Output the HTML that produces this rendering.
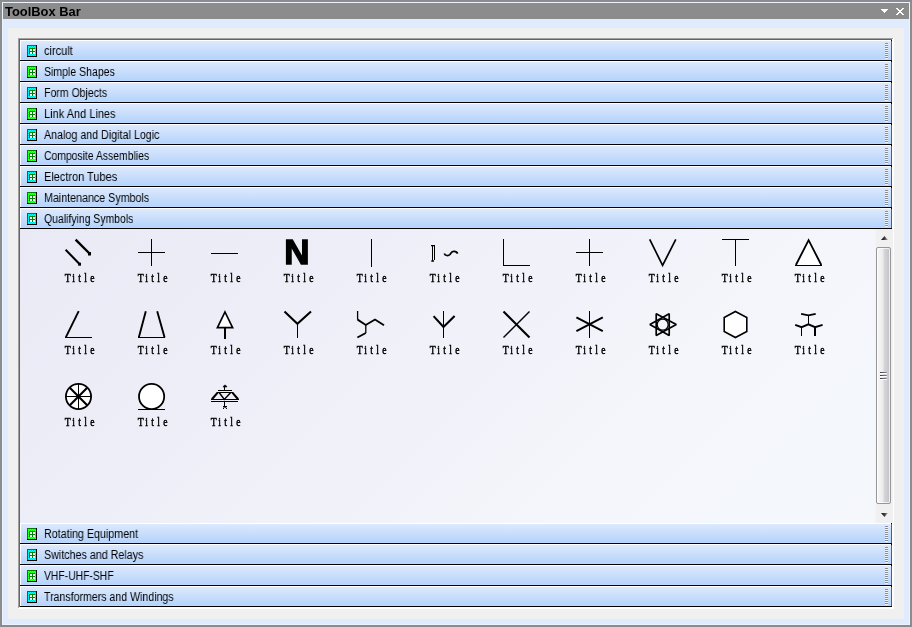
<!DOCTYPE html>
<html><head><meta charset="utf-8"><title>ToolBox Bar</title>
<style>
html,body{margin:0;padding:0;}
body{width:912px;height:627px;background:#8c8c8c;position:relative;overflow:hidden;font-family:"Liberation Sans",sans-serif;font-size:11px;color:#000;}
#frame{position:absolute;left:2px;top:2px;width:908px;height:623px;background:#e0ecfd;box-shadow:inset 0 0 0 1px #eaf3ff;}
#title{position:absolute;left:3px;top:3px;width:906px;height:16px;background:#8c8c8c;}
#title b{will-change:transform;position:absolute;left:2px;top:3px;font-size:12px;line-height:13px;font-weight:bold;white-space:nowrap;transform:scaleX(1.075);transform-origin:0 0;}
#panel{position:absolute;left:8px;top:28px;width:896px;height:591px;background:#f0f0f0;}
#list{position:absolute;left:18px;top:38px;width:876px;height:571px;background:#fff;}
#list .bt{position:absolute;left:0;top:0;width:875px;height:1px;background:#a0a0a0;}
#list .bl{position:absolute;left:0;top:0;width:1px;height:570px;background:#a0a0a0;}
#list .bt2{position:absolute;left:1px;top:1px;width:873px;height:1px;background:#646464;}
#list .bl2{position:absolute;left:1px;top:1px;width:1px;height:568px;background:#646464;}
.hdr{position:absolute;left:20px;width:872px;height:21px;background:linear-gradient(#000,#000) no-repeat 0 20px/872px 1px,linear-gradient(#000,#000) no-repeat 871px 0/1px 1px;}
.hdr:before{content:"";position:absolute;left:0;top:0;width:871px;height:20px;background:#fff;}
.hdr:after{content:"";position:absolute;left:1px;top:1px;width:870px;height:19px;background:linear-gradient(to bottom,#dde9fd 0%,#b6d4fb 94%,#c2ddff 100%);border-right:1px solid #43608f;}
.hdr .ic{position:absolute;left:7px;top:5px;z-index:2;}
.hdr .lb{will-change:transform;position:absolute;left:23.5px;top:4px;font-size:12.5px;line-height:14px;z-index:2;white-space:nowrap;transform:scaleX(0.857);transform-origin:0 0;}
.hdr .grip{position:absolute;left:865px;top:3px;width:3px;height:16px;z-index:2;background:repeating-linear-gradient(to bottom,#8e8c88 0,#8e8c88 1px,#f4f4f4 1px,#f4f4f4 2px);}
#content{position:absolute;left:20px;top:229px;width:855px;height:294px;background:linear-gradient(135deg,#eaeaf6 0%,#eeeef8 30%,#f4f6fb 72%,#f5f8fb 100%);}
#sb{position:absolute;left:875px;top:229px;width:17px;height:294px;background:#f0f0f0;border-left:1px solid #f3f4f6;}
#thumb{position:absolute;left:0px;top:18px;width:13px;height:255px;border:1px solid #979797;border-radius:2px;background:linear-gradient(to right,#f8f8f8 0%,#ececec 45%,#d6d6da 55%,#c2c2c6 100%);box-shadow:inset 0 0 0 1px rgba(255,255,255,.7);}
#thumb i{position:absolute;left:3px;width:7px;height:1px;background:linear-gradient(to right,#3a3c42,#8e9096);box-shadow:0 1px 0 #fff;}
.t{font-family:"Liberation Serif",serif;font-size:12px;fill:#000;stroke:#000;stroke-width:0.5px;}
svg{display:block;}
#icons{position:absolute;left:0;top:0;will-change:transform;}
</style></head><body>
<svg width="0" height="0" style="position:absolute"><defs><pattern id="dz" width="2" height="2" patternUnits="userSpaceOnUse"><rect x="0" y="0" width="1" height="1" fill="#00ffff"/><rect x="1" y="1" width="1" height="1" fill="#00ffff"/></pattern><linearGradient id="ag" x1="0" y1="0" x2="1" y2="0"><stop offset="0" stop-color="#111"/><stop offset="0.45" stop-color="#333"/><stop offset="1" stop-color="#b4b4b4"/></linearGradient></defs></svg>
<div id="frame"></div>
<div id="title"><b>ToolBox Bar</b>
<svg style="position:absolute;left:878px;top:6px" width="7" height="4" viewBox="0 0 7 4" shape-rendering="crispEdges"><path d="M0 0h7v1h-7zM1 1h5v1h-5zM2 2h3v1h-3zM3 3h1v1h-1z" fill="#fff"/></svg>
<svg style="position:absolute;left:893px;top:5px" width="8" height="7" viewBox="0 0 8 7" shape-rendering="crispEdges"><path d="M0 0h2v1h-2zM6 0h2v1h-2zM1 1h2v1h-2zM5 1h2v1h-2zM2 2h4v1h-4zM3 3h2v1h-2zM2 4h4v1h-4zM1 5h2v1h-2zM5 5h2v1h-2zM0 6h2v1h-2zM6 6h2v1h-2z" fill="#fff"/></svg>
</div>
<div id="panel"></div>
<div id="list"><div class="bt"></div><div class="bl"></div><div class="bt2"></div><div class="bl2"></div></div>
<div class="hdr" style="top:40px"><svg class="ic" width="10" height="12" viewBox="0 0 10 12" shape-rendering="crispEdges"><rect width="10" height="12" fill="#000"/><rect width="9" height="11" fill="#008000"/><rect x="1" y="1" width="8" height="10" fill="#00ff00"/><rect x="1" y="1" width="8" height="10" fill="url(#dz)"/><rect x="3" y="4" width="5" height="5" fill="#fff"/><path d="M2 3h6v1h-6zM2 6h6v1h-6zM2 3h1v6h-1zM5 3h1v6h-1z" fill="#008000"/></svg><span class="lb" style="transform:scaleX(0.879)">circult</span><i class="grip"></i></div>
<div class="hdr" style="top:61px"><svg class="ic" width="10" height="12" viewBox="0 0 10 12" shape-rendering="crispEdges"><rect width="10" height="12" fill="#000"/><rect width="9" height="11" fill="#008000"/><rect x="1" y="1" width="8" height="10" fill="#00ff00"/><rect x="1" y="1" width="8" height="10" fill="url(#dz)"/><rect x="3" y="4" width="5" height="5" fill="#fff"/><path d="M2 3h6v1h-6zM2 6h6v1h-6zM2 3h1v6h-1zM5 3h1v6h-1z" fill="#008000"/></svg><span class="lb" style="transform:scaleX(0.8425)">Simple Shapes</span><i class="grip"></i></div>
<div class="hdr" style="top:82px"><svg class="ic" width="10" height="12" viewBox="0 0 10 12" shape-rendering="crispEdges"><rect width="10" height="12" fill="#000"/><rect width="9" height="11" fill="#008000"/><rect x="1" y="1" width="8" height="10" fill="#00ff00"/><rect x="1" y="1" width="8" height="10" fill="url(#dz)"/><rect x="3" y="4" width="5" height="5" fill="#fff"/><path d="M2 3h6v1h-6zM2 6h6v1h-6zM2 3h1v6h-1zM5 3h1v6h-1z" fill="#008000"/></svg><span class="lb" style="transform:scaleX(0.842)">Form Objects</span><i class="grip"></i></div>
<div class="hdr" style="top:103px"><svg class="ic" width="10" height="12" viewBox="0 0 10 12" shape-rendering="crispEdges"><rect width="10" height="12" fill="#000"/><rect width="9" height="11" fill="#008000"/><rect x="1" y="1" width="8" height="10" fill="#00ff00"/><rect x="1" y="1" width="8" height="10" fill="url(#dz)"/><rect x="3" y="4" width="5" height="5" fill="#fff"/><path d="M2 3h6v1h-6zM2 6h6v1h-6zM2 3h1v6h-1zM5 3h1v6h-1z" fill="#008000"/></svg><span class="lb" style="transform:scaleX(0.88)">Link And Lines</span><i class="grip"></i></div>
<div class="hdr" style="top:124px"><svg class="ic" width="10" height="12" viewBox="0 0 10 12" shape-rendering="crispEdges"><rect width="10" height="12" fill="#000"/><rect width="9" height="11" fill="#008000"/><rect x="1" y="1" width="8" height="10" fill="#00ff00"/><rect x="1" y="1" width="8" height="10" fill="url(#dz)"/><rect x="3" y="4" width="5" height="5" fill="#fff"/><path d="M2 3h6v1h-6zM2 6h6v1h-6zM2 3h1v6h-1zM5 3h1v6h-1z" fill="#008000"/></svg><span class="lb" style="transform:scaleX(0.856)">Analog and Digital Logic</span><i class="grip"></i></div>
<div class="hdr" style="top:145px"><svg class="ic" width="10" height="12" viewBox="0 0 10 12" shape-rendering="crispEdges"><rect width="10" height="12" fill="#000"/><rect width="9" height="11" fill="#008000"/><rect x="1" y="1" width="8" height="10" fill="#00ff00"/><rect x="1" y="1" width="8" height="10" fill="url(#dz)"/><rect x="3" y="4" width="5" height="5" fill="#fff"/><path d="M2 3h6v1h-6zM2 6h6v1h-6zM2 3h1v6h-1zM5 3h1v6h-1z" fill="#008000"/></svg><span class="lb" style="transform:scaleX(0.831)">Composite Assemblies</span><i class="grip"></i></div>
<div class="hdr" style="top:166px"><svg class="ic" width="10" height="12" viewBox="0 0 10 12" shape-rendering="crispEdges"><rect width="10" height="12" fill="#000"/><rect width="9" height="11" fill="#008000"/><rect x="1" y="1" width="8" height="10" fill="#00ff00"/><rect x="1" y="1" width="8" height="10" fill="url(#dz)"/><rect x="3" y="4" width="5" height="5" fill="#fff"/><path d="M2 3h6v1h-6zM2 6h6v1h-6zM2 3h1v6h-1zM5 3h1v6h-1z" fill="#008000"/></svg><span class="lb" style="transform:scaleX(0.877)">Electron Tubes</span><i class="grip"></i></div>
<div class="hdr" style="top:187px"><svg class="ic" width="10" height="12" viewBox="0 0 10 12" shape-rendering="crispEdges"><rect width="10" height="12" fill="#000"/><rect width="9" height="11" fill="#008000"/><rect x="1" y="1" width="8" height="10" fill="#00ff00"/><rect x="1" y="1" width="8" height="10" fill="url(#dz)"/><rect x="3" y="4" width="5" height="5" fill="#fff"/><path d="M2 3h6v1h-6zM2 6h6v1h-6zM2 3h1v6h-1zM5 3h1v6h-1z" fill="#008000"/></svg><span class="lb" style="transform:scaleX(0.855)">Maintenance Symbols</span><i class="grip"></i></div>
<div class="hdr" style="top:208px"><svg class="ic" width="10" height="12" viewBox="0 0 10 12" shape-rendering="crispEdges"><rect width="10" height="12" fill="#000"/><rect width="9" height="11" fill="#008000"/><rect x="1" y="1" width="8" height="10" fill="#00ff00"/><rect x="1" y="1" width="8" height="10" fill="url(#dz)"/><rect x="3" y="4" width="5" height="5" fill="#fff"/><path d="M2 3h6v1h-6zM2 6h6v1h-6zM2 3h1v6h-1zM5 3h1v6h-1z" fill="#008000"/></svg><span class="lb" style="transform:scaleX(0.835)">Qualifying Symbols</span><i class="grip"></i></div>
<div id="content"></div>
<div id="sb">
<svg style="position:absolute;left:5px;top:7px" width="7" height="4" viewBox="0 0 7 4"><path d="M3.5 0L7 4H0z" fill="url(#ag)"/></svg>
<div id="thumb"><i style="top:124px"></i><i style="top:127px"></i><i style="top:130px"></i></div>
<svg style="position:absolute;left:5px;top:284px" width="7" height="4" viewBox="0 0 7 4"><path d="M0 0H7L3.5 4z" fill="url(#ag)"/></svg>
</div>
<div class="hdr" style="top:523px"><svg class="ic" width="10" height="12" viewBox="0 0 10 12" shape-rendering="crispEdges"><rect width="10" height="12" fill="#000"/><rect width="9" height="11" fill="#008000"/><rect x="1" y="1" width="8" height="10" fill="#00ff00"/><rect x="1" y="1" width="8" height="10" fill="url(#dz)"/><rect x="3" y="4" width="5" height="5" fill="#fff"/><path d="M2 3h6v1h-6zM2 6h6v1h-6zM2 3h1v6h-1zM5 3h1v6h-1z" fill="#008000"/></svg><span class="lb" style="transform:scaleX(0.857)">Rotating Equipment</span><i class="grip"></i></div>
<div class="hdr" style="top:544px"><svg class="ic" width="10" height="12" viewBox="0 0 10 12" shape-rendering="crispEdges"><rect width="10" height="12" fill="#000"/><rect width="9" height="11" fill="#008000"/><rect x="1" y="1" width="8" height="10" fill="#00ff00"/><rect x="1" y="1" width="8" height="10" fill="url(#dz)"/><rect x="3" y="4" width="5" height="5" fill="#fff"/><path d="M2 3h6v1h-6zM2 6h6v1h-6zM2 3h1v6h-1zM5 3h1v6h-1z" fill="#008000"/></svg><span class="lb" style="transform:scaleX(0.857)">Switches and Relays</span><i class="grip"></i></div>
<div class="hdr" style="top:565px"><svg class="ic" width="10" height="12" viewBox="0 0 10 12" shape-rendering="crispEdges"><rect width="10" height="12" fill="#000"/><rect width="9" height="11" fill="#008000"/><rect x="1" y="1" width="8" height="10" fill="#00ff00"/><rect x="1" y="1" width="8" height="10" fill="url(#dz)"/><rect x="3" y="4" width="5" height="5" fill="#fff"/><path d="M2 3h6v1h-6zM2 6h6v1h-6zM2 3h1v6h-1zM5 3h1v6h-1z" fill="#008000"/></svg><span class="lb" style="transform:scaleX(0.828)">VHF-UHF-SHF</span><i class="grip"></i></div>
<div class="hdr" style="top:586px"><svg class="ic" width="10" height="12" viewBox="0 0 10 12" shape-rendering="crispEdges"><rect width="10" height="12" fill="#000"/><rect width="9" height="11" fill="#008000"/><rect x="1" y="1" width="8" height="10" fill="#00ff00"/><rect x="1" y="1" width="8" height="10" fill="url(#dz)"/><rect x="3" y="4" width="5" height="5" fill="#fff"/><path d="M2 3h6v1h-6zM2 6h6v1h-6zM2 3h1v6h-1zM5 3h1v6h-1z" fill="#008000"/></svg><span class="lb" style="transform:scaleX(0.8465)">Transformers and Windings</span><i class="grip"></i></div>
<svg id="icons" width="912" height="627" viewBox="0 0 912 627">
<g transform="translate(65 239)"><path d="M10.6 0.7L24.5 14.5" stroke="#000" stroke-width="2.4"/><rect x="23" y="13" width="3" height="3.5"/><path d="M0.6 10.8L14.5 25" stroke="#000" stroke-width="2"/><rect x="13.2" y="23.7" width="2.8" height="3"/></g>
<g transform="translate(138 239)"><path d="M13.5 0V27M0 13.5H27" stroke="#000" stroke-width="1" shape-rendering="crispEdges"/></g>
<g transform="translate(211 239)"><path d="M0 14.5H27" stroke="#000" stroke-width="1" shape-rendering="crispEdges"/></g>
<g transform="translate(284 239)"><text x="13" y="25.2" text-anchor="middle" font-family="Liberation Sans, sans-serif" font-weight="bold" font-size="35" stroke="#000" stroke-width="1.4" stroke-linejoin="miter">N</text></g>
<g transform="translate(357 239)"><path d="M14.5 0V28" stroke="#000" stroke-width="1" shape-rendering="crispEdges"/></g>
<g transform="translate(430 239)"><path d="M1 6.6H5M1.3 22H4" stroke="#000" stroke-width="1.4"/><path d="M2.5 7V22M4.5 7V21" stroke="#000" stroke-width="1" shape-rendering="crispEdges"/><path d="M14.3 14.6C15 17 18.5 17 20 15.5C21 14 21.5 12.6 23.5 12.4C25.5 12.2 27 13 27.6 14.6" stroke="#000" stroke-width="1.7" fill="none"/></g>
<g transform="translate(503 239)"><path d="M0.5 0V26.5H27" stroke="#000" stroke-width="1" fill="none" shape-rendering="crispEdges"/></g>
<g transform="translate(576 239)"><path d="M13.5 0V27M0 13.5H27" stroke="#000" stroke-width="1" shape-rendering="crispEdges"/></g>
<g transform="translate(649 239)"><path d="M0.7 0.3L13.6 26.3L26.8 0.3" stroke="#000" stroke-width="1.7" fill="none"/></g>
<g transform="translate(722 239)"><path d="M0 0.5H27M13.5 0V27" stroke="#000" stroke-width="1" fill="none" shape-rendering="crispEdges"/></g>
<g transform="translate(795 239)"><path d="M13.6 1L26.5 26.3H0.7z" fill="#fff"/><path d="M0.9 26L13.6 1.2L26.3 26" stroke="#000" stroke-width="1.8" fill="none"/><path d="M0 26.5H27" stroke="#000" stroke-width="1" shape-rendering="crispEdges"/></g>
<g transform="translate(65 311)"><path d="M13.7 0.2L0.8 26.4" stroke="#000" stroke-width="1.9" fill="none"/><path d="M0 26.5H27" stroke="#000" stroke-width="1" shape-rendering="crispEdges"/></g>
<g transform="translate(138 311)"><path d="M7.8 0.2L0.8 26.4M26.6 26.4L19.2 0.2" stroke="#000" stroke-width="1.9" fill="none"/><path d="M0 26.5H27" stroke="#000" stroke-width="1" shape-rendering="crispEdges"/></g>
<g transform="translate(211 311)"><path d="M14 1L21.6 16.6H6.4z" stroke="#000" stroke-width="1.7" fill="#fff"/><path d="M14 17V28" stroke="#000" stroke-width="2" shape-rendering="crispEdges"/></g>
<g transform="translate(284 311)"><path d="M0.5 0.5L13.4 12.7L27 0.5" stroke="#000" stroke-width="2.1" fill="none"/><path d="M13.5 12.5V27" stroke="#000" stroke-width="1" shape-rendering="crispEdges"/></g>
<g transform="translate(357 311)"><path d="M0.6 0V8.8M8.8 14V22" stroke="#000" stroke-width="1.3" fill="none"/><path d="M0.6 8.6L8.8 14L18 8.5L27 14.3M8.8 22L0.4 26.5" stroke="#000" stroke-width="1.9" fill="none"/></g>
<g transform="translate(430 311)"><path d="M13.5 0V27" stroke="#000" stroke-width="1" shape-rendering="crispEdges"/><path d="M3.6 5.1L13.5 16L24.6 5.1" stroke="#000" stroke-width="2.1" fill="none"/></g>
<g transform="translate(503 311)"><path d="M0.5 0.5L26.5 26.5" stroke="#000" stroke-width="2.2"/><path d="M26.5 0.5L0.5 26.5" stroke="#000" stroke-width="1.5"/></g>
<g transform="translate(576 311)"><path d="M13.5 0V27" stroke="#000" stroke-width="1" shape-rendering="crispEdges"/><path d="M0.4 6.4L26.8 20.2M0.4 20.2L26.8 6.4" stroke="#000" stroke-width="2"/></g>
<g transform="translate(649 311)"><path d="M0.9 13.6L20.2 2.8V24.6zM27.3 13.6L7.2 2.8V24.6z" stroke="#000" stroke-width="1.7" fill="none" stroke-linejoin="bevel"/><circle cx="13.7" cy="13.7" r="5.5" stroke="#000" stroke-width="1.3" fill="none"/></g>
<g transform="translate(722 311)"><path d="M13.4 0.5L24.8 6.5V20.5L13.4 26.5L2.2 20.5V6.5z" stroke="#000" stroke-width="1.6" fill="#fff"/></g>
<g transform="translate(795 311)"><path d="M6.1 2.8L13.4 4.3L20.7 2.8" stroke="#000" stroke-width="1.8" fill="none"/><path d="M13.5 4V13.5M6.5 16V25" stroke="#000" stroke-width="1" shape-rendering="crispEdges"/><path d="M0.2 13.8L6.6 16.2L13.4 13.3L20.1 16.2L27.6 13.8" stroke="#000" stroke-width="1.8" fill="none"/><path d="M20 16V25" stroke="#000" stroke-width="2" shape-rendering="crispEdges"/></g>
<g transform="translate(65 383)"><circle cx="13.5" cy="13.5" r="12.6" stroke="#000" stroke-width="1.8" fill="#fff"/><path d="M13.5 1V26M1 13.5H26" stroke="#000" stroke-width="1" shape-rendering="crispEdges"/><path d="M4.8 4.8L22.2 22.2M22.2 4.8L4.8 22.2" stroke="#000" stroke-width="2.1"/></g>
<g transform="translate(138 383)"><circle cx="13.6" cy="13.5" r="12.6" stroke="#000" stroke-width="1.8" fill="#fff"/><path d="M0 26.5H27" stroke="#000" stroke-width="1" shape-rendering="crispEdges"/></g>
<g transform="translate(211 383)"><path d="M12 4L13.3 2.2H14.7L16 4z" fill="#000" stroke="#000" stroke-width="0.6"/><path d="M13.5 3V7M7 7.5H21M6 9.5H22M0 16.5H28M0 18.5H27M13.5 19V24M12 23.5H16" stroke="#000" stroke-width="1" shape-rendering="crispEdges"/><path d="M6.6 9.6L0.9 16.2M21.4 9.6L27.1 16.2" stroke="#000" stroke-width="2.1"/><path d="M8.3 9.8L13.3 16.4L19.5 9.8" stroke="#000" stroke-width="1.5" fill="none"/><path d="M12.2 26L13.4 24M15.8 26L14.4 24" stroke="#000" stroke-width="1"/></g>
<text class="t" transform="translate(65 282) scale(0.8 1)" x="-0.3 8.96 16.6 24.1 31.5" y="0">Title</text>
<text class="t" transform="translate(138 282) scale(0.8 1)" x="-0.3 8.96 16.6 24.1 31.5" y="0">Title</text>
<text class="t" transform="translate(211 282) scale(0.8 1)" x="-0.3 8.96 16.6 24.1 31.5" y="0">Title</text>
<text class="t" transform="translate(284 282) scale(0.8 1)" x="-0.3 8.96 16.6 24.1 31.5" y="0">Title</text>
<text class="t" transform="translate(357 282) scale(0.8 1)" x="-0.3 8.96 16.6 24.1 31.5" y="0">Title</text>
<text class="t" transform="translate(430 282) scale(0.8 1)" x="-0.3 8.96 16.6 24.1 31.5" y="0">Title</text>
<text class="t" transform="translate(503 282) scale(0.8 1)" x="-0.3 8.96 16.6 24.1 31.5" y="0">Title</text>
<text class="t" transform="translate(576 282) scale(0.8 1)" x="-0.3 8.96 16.6 24.1 31.5" y="0">Title</text>
<text class="t" transform="translate(649 282) scale(0.8 1)" x="-0.3 8.96 16.6 24.1 31.5" y="0">Title</text>
<text class="t" transform="translate(722 282) scale(0.8 1)" x="-0.3 8.96 16.6 24.1 31.5" y="0">Title</text>
<text class="t" transform="translate(795 282) scale(0.8 1)" x="-0.3 8.96 16.6 24.1 31.5" y="0">Title</text>
<text class="t" transform="translate(65 354) scale(0.8 1)" x="-0.3 8.96 16.6 24.1 31.5" y="0">Title</text>
<text class="t" transform="translate(138 354) scale(0.8 1)" x="-0.3 8.96 16.6 24.1 31.5" y="0">Title</text>
<text class="t" transform="translate(211 354) scale(0.8 1)" x="-0.3 8.96 16.6 24.1 31.5" y="0">Title</text>
<text class="t" transform="translate(284 354) scale(0.8 1)" x="-0.3 8.96 16.6 24.1 31.5" y="0">Title</text>
<text class="t" transform="translate(357 354) scale(0.8 1)" x="-0.3 8.96 16.6 24.1 31.5" y="0">Title</text>
<text class="t" transform="translate(430 354) scale(0.8 1)" x="-0.3 8.96 16.6 24.1 31.5" y="0">Title</text>
<text class="t" transform="translate(503 354) scale(0.8 1)" x="-0.3 8.96 16.6 24.1 31.5" y="0">Title</text>
<text class="t" transform="translate(576 354) scale(0.8 1)" x="-0.3 8.96 16.6 24.1 31.5" y="0">Title</text>
<text class="t" transform="translate(649 354) scale(0.8 1)" x="-0.3 8.96 16.6 24.1 31.5" y="0">Title</text>
<text class="t" transform="translate(722 354) scale(0.8 1)" x="-0.3 8.96 16.6 24.1 31.5" y="0">Title</text>
<text class="t" transform="translate(795 354) scale(0.8 1)" x="-0.3 8.96 16.6 24.1 31.5" y="0">Title</text>
<text class="t" transform="translate(65 426) scale(0.8 1)" x="-0.3 8.96 16.6 24.1 31.5" y="0">Title</text>
<text class="t" transform="translate(138 426) scale(0.8 1)" x="-0.3 8.96 16.6 24.1 31.5" y="0">Title</text>
<text class="t" transform="translate(211 426) scale(0.8 1)" x="-0.3 8.96 16.6 24.1 31.5" y="0">Title</text>
</svg>
</body></html>
